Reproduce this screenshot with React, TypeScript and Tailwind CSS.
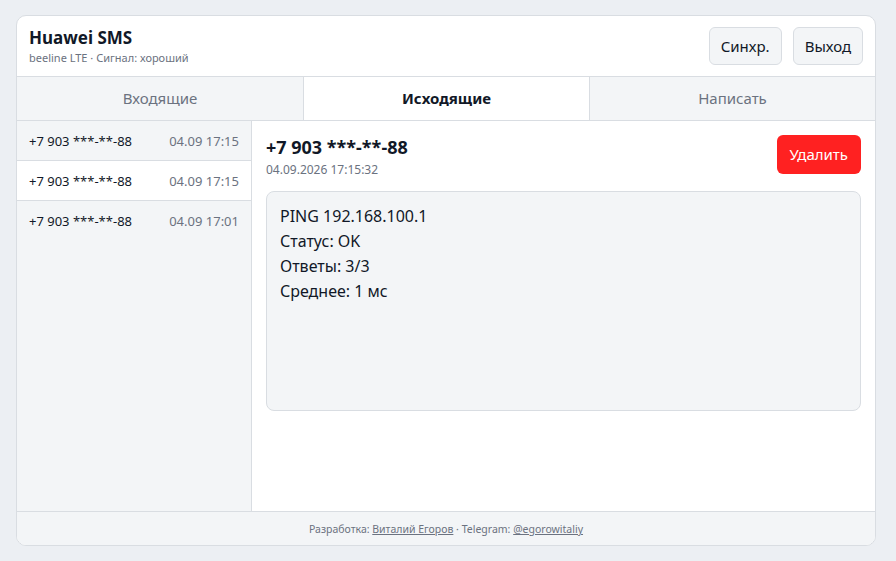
const threads = [
  { phone: "+7 903 ***-**-88", time: "04.09 17:15", active: false },
  { phone: "+7 903 ***-**-88", time: "04.09 17:15", active: true },
  { phone: "+7 903 ***-**-88", time: "04.09 17:01", active: false },
];

const tabs = [
  { label: "Входящие", active: false },
  { label: "Исходящие", active: true },
  { label: "Написать", active: false },
];

const body = ["PING 192.168.100.1", "Статус: OK", "Ответы: 3/3", "Среднее: 1 мс"];

export default function App() {
  return (
    <div
      className="min-h-screen bg-[#eceff3] px-4 py-[15px] text-[#111827]"
      style={{ fontFamily: '"Noto Sans", "Open Sans", sans-serif' }}
    >
      <div className="flex h-[531px] w-[860px] flex-col overflow-hidden rounded-[10px] border border-[#d9dde2] bg-white">
        {/* header */}
        <header className="flex h-[61px] items-center justify-between border-b border-[#d9dde2] pl-3 pr-3">
          <div>
            <h1 className="text-[17px] font-bold leading-6">Huawei SMS</h1>
            <p className="text-[11px] leading-4 text-[#6b7280]">beeline LTE · Сигнал: хороший</p>
          </div>
          <div className="flex gap-[11px]">
            <button className="h-[38px] rounded-md border border-[#d9dde2] bg-[#f3f5f7] px-[11px] text-[15px]">
              Синхр.
            </button>
            <button className="h-[38px] rounded-md border border-[#d9dde2] bg-[#f3f5f7] px-[11px] text-[15px]">
              Выход
            </button>
          </div>
        </header>

        {/* tabs */}
        <nav className="grid h-[44px] grid-cols-3 border-b border-[#d9dde2]">
          {tabs.map((t, i) => (
            <div
              key={t.label}
              className={
                "flex items-center justify-center text-[15px] " +
                (i > 0 ? "border-l border-[#d9dde2] " : "") +
                (t.active ? "bg-white font-bold text-[#111827]" : "bg-[#f3f5f7] text-[#6b7280]")
              }
            >
              {t.label}
            </div>
          ))}
        </nav>

        <div className="flex min-h-0 flex-1">
          {/* thread list */}
          <aside className="w-[235px] shrink-0 border-r border-[#d9dde2] bg-[#f3f5f7]">
            {threads.map((m, i) => (
              <div
                key={i}
                className={
                  "flex h-10 items-center justify-between pl-3 pr-3 pt-[2px] text-[13px] " +
                  (i < threads.length - 1 ? "border-b border-[#d9dde2] " : "") +
                  (m.active ? "bg-white" : "")
                }
              >
                <span>{m.phone}</span>
                <span className="text-[#6b7280]">{m.time}</span>
              </div>
            ))}
          </aside>

          {/* message view */}
          <section className="flex-1 px-[14px] pt-[14px]">
            <div className="flex items-start justify-between">
              <div>
                <div className="text-[18px] font-bold leading-6">+7 903 ***-**-88</div>
                <div className="mt-[2px] text-[12px] text-[#6b7280]">04.09.2026 17:15:32</div>
              </div>
              <button className="h-[39px] rounded-md bg-[#ff2121] px-[13px] text-[15px] text-white">
                Удалить
              </button>
            </div>
            <div className="mt-3 h-[220px] rounded-lg border border-[#d9dde2] bg-[#f3f5f7] px-[13px] py-[12px] text-[16px] leading-[25px]">
              {body.map((l) => (
                <div key={l}>{l}</div>
              ))}
            </div>
          </section>
        </div>

        {/* footer */}
        <footer className="flex h-[34px] items-center justify-center border-t border-[#d9dde2] bg-[#f3f5f7] pt-[3px] text-[10.5px] text-[#6b7280]">
          Разработка:&nbsp;<a className="underline">Виталий Егоров</a>&nbsp;· Telegram:&nbsp;
          <a className="underline">@egorowitaliy</a>
        </footer>
      </div>
    </div>
  );
}
